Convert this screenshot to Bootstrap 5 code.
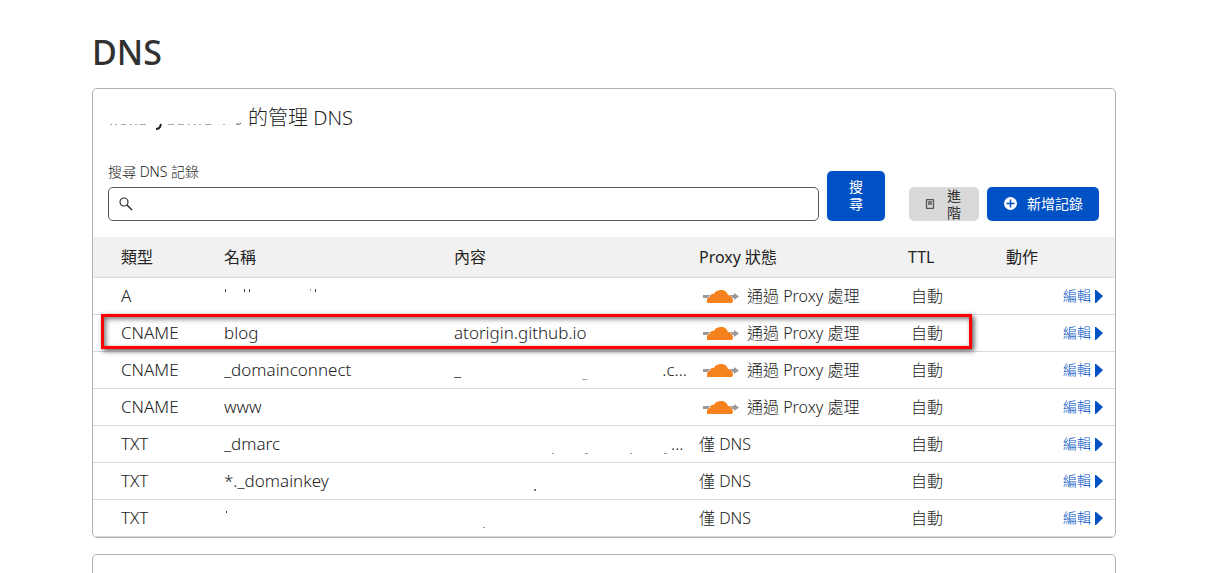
<!DOCTYPE html>
<html lang="zh-Hant">
<head>
<meta charset="utf-8">
<meta name="viewport" content="width=device-width, initial-scale=1">
<title>DNS</title>
<link href="https://cdn.jsdelivr.net/npm/bootstrap@5.3.0/dist/css/bootstrap.min.css" rel="stylesheet">
<style>
  body { font-family: "Noto Sans", "Noto Sans CJK TC", sans-serif; font-weight: 300; color: #222; background: #fff; }
  .dns-page { max-width: 1046px; padding: 28px 22px 0 0; }
  .page-title { font-size: 34px; line-height: 48px; font-weight: 500; margin-bottom: 12px; color: #313131; }
  .panel { border: 1px solid #b3b3b3; border-radius: 5px; background: #fff; overflow: hidden; }
  .panel-title { font-size: 20px; line-height: 28px; font-weight: 300; }
  .panel-head { padding: 15px 16px 16px 15px; }
  .search-row { margin-top: 30px; }
  .search-label { font-size: 14px; line-height: 20px; margin-bottom: 5px; }
  .search-box { height: 34px; border: 1px solid #595959; border-radius: 5px; padding-left: 10px; }
  .search-box input { outline: 0; font-size: 14px; }
  .act { border: 0; border-radius: 5px; font-size: 14px; line-height: 17px; color: #fff; background: #0051c3; padding: 0 16px; }
  .act-search { width: 58px; height: 50px; padding: 0 20px 2px; }
  .act-more { width: 70px; height: 34px; background: #d9d9d9; color: #313131; margin-left: 16px; padding-right: 18px; }
  .act-add { width: 112px; height: 34px; padding-bottom: 1px; }
  .records { table-layout: fixed; width: 100%; font-size: 16px; line-height: 24px; }
  .records th, .records td { padding: 6px 0 6px 12px; border-bottom: 1px solid #d9d9d9; white-space: nowrap; }
  .records th { background: #f1f1f1; font-weight: 400; padding-top: 8px; padding-bottom: 8px; }
  .records th:first-child, .records td:first-child { padding-left: 28px; }
  .records th:last-child, .records td:last-child { padding-right: 12px; }
  .records td:nth-child(-n+3) { font-size: 17px; }
  .records td:nth-child(5) { padding-left: 15px; }
  .records a { color: #0051c3; font-size: 14px; font-weight: 300; text-decoration: none; }
  .records svg { display: block; }
  .marked { position: relative; }
  .mark-frame { position: absolute; inset: -1px 143px 3px 8px; border: 3px solid #f00; box-shadow: 2px 2px 5px #555, inset 2px 2px 5px #777; pointer-events: none; }
  .next-panel { height: 64px; margin-top: 16px; }
  .view { height: 100vh; overflow: hidden; }
</style>
</head>
<body>
<svg width="0" height="0" class="position-absolute" aria-hidden="true">
  <symbol id="cloud" viewBox="0 0 36 14">
    <path d="M0 6h7v3H0zM25 6h6V4l5 3.500-5 3.500V9h-6z" fill="#999"/>
    <path d="M4 14V11c0-2 1-3 3-3 0-2 2-4 4-3 1-3 4-4 7-4 4 0 6 2 7 5 2 0 3 1 3 2 1 0 2 2 2 4l-1 2z" fill="#f6821f" stroke="#fff" stroke-width="1" paint-order="stroke"/>
  </symbol>
  <symbol id="arrow" viewBox="0 0 8 14"><path d="M0 1h1l7 6-7 7H0z" fill="#0051c3"/></symbol>
</svg>
<div class="view">
<main class="dns-page mx-auto">
  <h1 class="page-title">DNS</h1>
  <section class="panel">
    <div class="panel-head">
      <h2 class="panel-title d-flex align-items-center mb-0">
        <svg class="flex-shrink-0" width="140" height="28" viewBox="0 0 140 28" aria-hidden="true">
          <path d="M2 20.500h2m3 0h2m4 0h5m4 0h2m3 0h2m3 0h6m22 0h6m4 0h6m4 0h2m4 0h2m3 0h2m4 0h6m12 0h2" stroke="#aaa"/>
          <path d="M53 20l-1 3q-1 2-4 2" fill="none" stroke="#222" stroke-width="2"/>
          <path d="M128 20q4 1 5-1" fill="none" stroke="#555"/>
        </svg>
        <span>的管理 DNS</span>
      </h2>
      <form class="search-row d-flex align-items-end gap-2">
        <div class="flex-grow-1">
          <label for="q" class="search-label d-block">搜尋 DNS 記錄</label>
          <div class="search-box d-flex align-items-center gap-2">
            <svg width="14" height="14" viewBox="0 0 14 14" fill="none" stroke="#313131" aria-hidden="true"><circle cx="5" cy="5" r="4" stroke-width="1.200"/><path d="M8 8l5 5" stroke-width="1.600"/></svg>
            <input id="q" type="text" class="border-0 flex-grow-1 p-0 me-2">
          </div>
        </div>
        <button type="button" class="act act-search">搜尋</button>
        <div class="d-flex gap-2">
        <button type="button" class="act act-more d-flex align-items-center justify-content-between">
          <svg class="flex-shrink-0" width="10" height="10" viewBox="0 0 10 10" fill="none" stroke="#555" aria-hidden="true"><rect x="1.500" y=".5" width="7" height="9" rx="1" stroke-width="1.300"/><path d="M3 3h4M3 5h4" stroke-width="1.300"/></svg>
          <span class="ms-2 ps-1">進階</span>
        </button>
        <button type="button" class="act act-add d-flex align-items-center justify-content-between text-nowrap">
          <svg class="flex-shrink-0" width="15" height="15" viewBox="0 0 15 15" aria-hidden="true"><circle cx="7.500" cy="7.500" r="6.500" fill="#fff"/><path d="M7.500 3.500v8M3.500 7.500h8" stroke="#0051c3" stroke-width="1.500"/></svg>
          新增記錄
        </button>
        </div>
      </form>
    </div>
    <table class="records">
      <colgroup><col width="119"><col width="230"><col width="245"><col width="209"><col width="98"><col width="121"></colgroup>
      <thead><tr><th>類型</th><th>名稱</th><th>內容</th><th>Proxy 狀態</th><th>TTL</th><th>動作</th></tr></thead>
      <tbody>
        <tr><td>A</td>
          <td><svg width="100" height="16" viewBox="0 0 100 16" aria-hidden="true"><path d="M1.500 1v3M20.500 1v3M25.500 1v3M91.500 1v3" stroke="#444"/><path d="M86 2h1" stroke="#444"/></svg></td>
          <td></td><td><div class="d-flex align-items-center gap-2 ps-1"><svg width="36" height="14" aria-hidden="true"><use href="#cloud"/></svg>通過 Proxy 處理</div></td><td>自動</td>
          <td><a href="#" class="d-flex align-items-center justify-content-end gap-1">編輯<svg width="8" height="14" aria-hidden="true"><use href="#arrow"/></svg></a></td></tr>
        <tr class="marked"><td>CNAME<span class="mark-frame"></span></td><td>blog</td><td>atorigin.github.io</td>
          <td><div class="d-flex align-items-center gap-2 ps-1"><svg width="36" height="14" aria-hidden="true"><use href="#cloud"/></svg>通過 Proxy 處理</div></td><td>自動</td>
          <td><a href="#" class="d-flex align-items-center justify-content-end gap-1">編輯<svg width="8" height="14" aria-hidden="true"><use href="#arrow"/></svg></a></td></tr>
        <tr><td>CNAME</td><td>_domainconnect</td>
          <td><div class="d-flex justify-content-between"><span>_</span><svg width="8" height="24" class="ms-5" aria-hidden="true"><path d="M0 21.500h5" stroke="#aaa"/></svg><span>.c...</span></div></td>
          <td><div class="d-flex align-items-center gap-2 ps-1"><svg width="36" height="14" aria-hidden="true"><use href="#cloud"/></svg>通過 Proxy 處理</div></td><td>自動</td>
          <td><a href="#" class="d-flex align-items-center justify-content-end gap-1">編輯<svg width="8" height="14" aria-hidden="true"><use href="#arrow"/></svg></a></td></tr>
        <tr><td>CNAME</td><td>www</td><td></td>
          <td><div class="d-flex align-items-center gap-2 ps-1"><svg width="36" height="14" aria-hidden="true"><use href="#cloud"/></svg>通過 Proxy 處理</div></td><td>自動</td>
          <td><a href="#" class="d-flex align-items-center justify-content-end gap-1">編輯<svg width="8" height="14" aria-hidden="true"><use href="#arrow"/></svg></a></td></tr>
        <tr><td>TXT</td><td>_dmarc</td>
          <td><div class="d-flex"><svg width="217" height="24" aria-hidden="true"><path d="M98 21.500h2M131 21.500h3M176 21.500h2M210 21.500h3" stroke="#999"/></svg><span>...</span></div></td>
          <td>僅 DNS</td><td>自動</td>
          <td><a href="#" class="d-flex align-items-center justify-content-end gap-1">編輯<svg width="8" height="14" aria-hidden="true"><use href="#arrow"/></svg></a></td></tr>
        <tr><td>TXT</td><td>*._domainkey</td>
          <td><svg width="100" height="24" aria-hidden="true"><path d="M80 21h2" stroke="#777" stroke-width="2"/></svg></td>
          <td>僅 DNS</td><td>自動</td>
          <td><a href="#" class="d-flex align-items-center justify-content-end gap-1">編輯<svg width="8" height="14" aria-hidden="true"><use href="#arrow"/></svg></a></td></tr>
        <tr><td>TXT</td>
          <td><svg width="10" height="16" aria-hidden="true"><path d="M2.500 1v2" stroke="#444"/></svg></td>
          <td><svg width="100" height="24" aria-hidden="true"><path d="M29 21.500h2" stroke="#999"/></svg></td>
          <td>僅 DNS</td><td>自動</td>
          <td><a href="#" class="d-flex align-items-center justify-content-end gap-1">編輯<svg width="8" height="14" aria-hidden="true"><use href="#arrow"/></svg></a></td></tr>
      </tbody>
    </table>
  </section>
  <section class="panel next-panel"></section>
</main>
</div>
<script src="https://cdn.jsdelivr.net/npm/bootstrap@5.3.0/dist/js/bootstrap.bundle.min.js"></script>
</body>
</html>
